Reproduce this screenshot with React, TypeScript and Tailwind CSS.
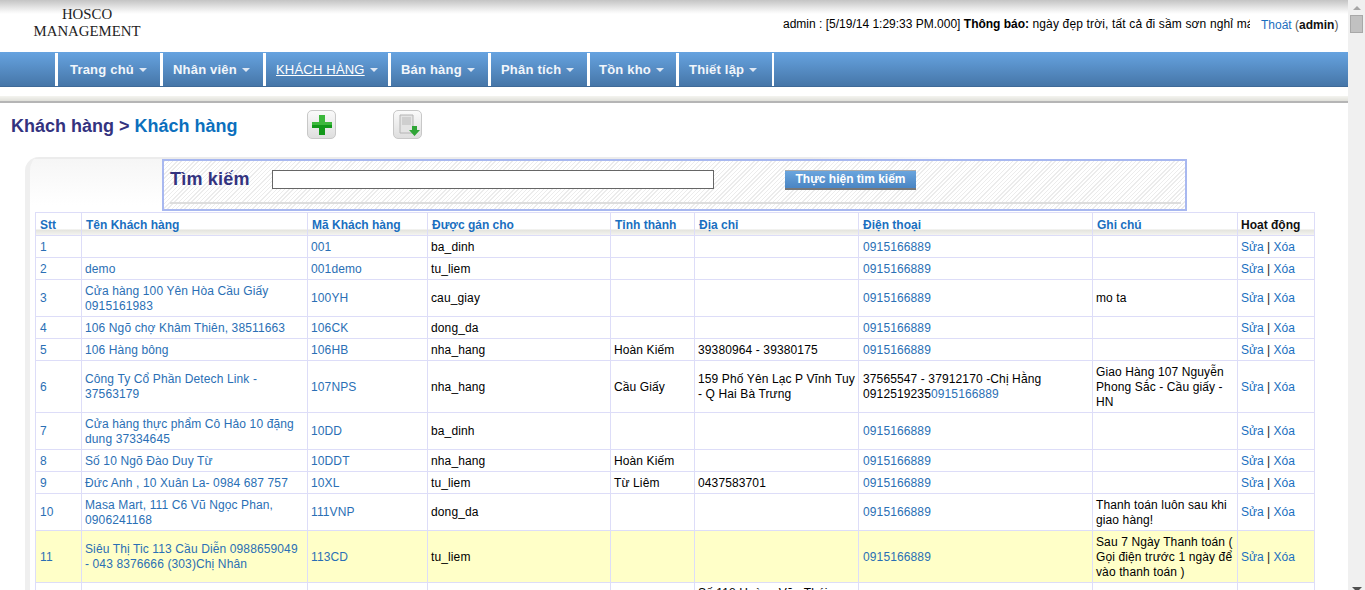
import React from "react";

const headers = ["Stt", "Tên Khách hàng", "Mã Khách hàng", "Được gán cho", "Tỉnh thành", "Địa chỉ", "Điện thoại", "Ghi chú", "Hoạt động"];
const menus = [
  { label: "Trang chủ", w: "w-[105px] pl-[12px]" },
  { label: "Nhân viên", w: "w-[103px] pl-[10px]" },
  { label: "KHÁCH HÀNG", w: "w-[125px] pl-[10px]", active: true },
  { label: "Bán hàng", w: "w-[100px] pl-[10px]" },
  { label: "Phân tích", w: "w-[99px] pl-[10px]" },
  { label: "Tồn kho", w: "w-[89px] pl-[9px]" },
  { label: "Thiết lập", w: "w-[96px] pl-[10px]" },
];

const rows = [
  { h: "h-[22px]", name: "", code: "001", user: "ba_dinh", city: "", addr: "", phone: ["0915166889"], note: "" },
  { h: "h-[22px]", name: "demo", code: "001demo", user: "tu_liem", city: "", addr: "", phone: ["0915166889"], note: "" },
  { h: "h-[37px]", name: "Cửa hàng 100 Yên Hòa Cầu Giấy 0915161983", code: "100YH", user: "cau_giay", city: "", addr: "", phone: ["0915166889"], note: "mo ta" },
  { h: "h-[22px]", name: "106 Ngõ chợ Khâm Thiên, 38511663", code: "106CK", user: "dong_da", city: "", addr: "", phone: ["0915166889"], note: "" },
  { h: "h-[22px]", name: "106 Hàng bông", code: "106HB", user: "nha_hang", city: "Hoàn Kiếm", addr: "39380964 - 39380175", phone: ["0915166889"], note: "" },
  { h: "h-[52px]", name: "Công Ty Cổ Phần Detech Link - 37563179", code: "107NPS", user: "nha_hang", city: "Cầu Giấy", addr: "159 Phố Yên Lạc P Vĩnh Tuy - Q Hai Bà Trưng", phone: ["37565547 - 37912170 -Chị Hằng 0912519235", "0915166889"], note: "Giao Hàng 107 Nguyễn Phong Sắc - Cầu giấy - HN" },
  { h: "h-[37px]", name: "Cửa hàng thực phẩm Cô Hảo 10 đặng dung 37334645", code: "10DD", user: "ba_dinh", city: "", addr: "", phone: ["0915166889"], note: "" },
  { h: "h-[22px]", name: "Số 10 Ngõ Đào Duy Từ", code: "10DDT", user: "nha_hang", city: "Hoàn Kiếm", addr: "", phone: ["0915166889"], note: "" },
  { h: "h-[22px]", name: "Đức Anh , 10 Xuân La- 0984 687 757", code: "10XL", user: "tu_liem", city: "Từ Liêm", addr: "0437583701", phone: ["0915166889"], note: "" },
  { h: "h-[37px]", name: "Masa Mart, 111 C6 Vũ Ngọc Phan, 0906241168", code: "111VNP", user: "dong_da", city: "", addr: "", phone: ["0915166889"], note: "Thanh toán luôn sau khi giao hàng!" },
  { h: "h-[52px]", name: "Siêu Thị Tic 113 Cầu Diễn 0988659049 - 043 8376666 (303)Chị Nhân", code: "113CD", user: "tu_liem", city: "", addr: "", phone: ["0915166889"], note: "Sau 7 Ngày Thanh toán ( Gọi điện trước 1 ngày để vào thanh toán )", hl: true },
];

const Caret = () => (
  <span className="inline-block ml-[5px] align-middle border-x-[4px] border-x-transparent border-t-[4px] border-t-[#dfe8f3]" />
);

const App = () => {
  return (
    <div className="h-[590px] w-[1365px] overflow-hidden flex bg-white font-['Liberation_Sans',Arial,sans-serif] text-[12px] leading-[15px] text-black">
      <div className="w-[1348px] shrink-0 overflow-hidden">
        {/* top bar */}
        <header className="h-[52px] flex bg-[linear-gradient(#c4c4c4,#f4f4f4_11px,#fff_14px)]">
          <div className="w-[174px] shrink-0 pt-[6px] text-center font-['Liberation_Serif',serif] text-[14.8px] leading-[17px] text-[#222]">
            HOSCO
            <br />
            MANAGEMENT
          </div>
          <div className="ml-[609px] w-[467px] shrink-0 pt-[17px] overflow-hidden whitespace-nowrap">
            admin : [5/19/14 1:29:33 PM.000] <b>Thông báo:</b>{" "}
            <span className="tracking-[0.15px]">ngày đẹp trời, tất cả đi sầm sơn nghỉ mát</span>
          </div>
          <div className="ml-[11px] pt-[18px] whitespace-nowrap text-[#1a6fc0]">
            Thoát <span className="text-[#555]">(</span>
            <b className="text-[#111]">admin</b>
            <span className="text-[#555]">)</span>
          </div>
        </header>

        {/* menu */}
        <nav className="h-[35px] flex pl-[55px] border-b-[1px] border-b-[#3f6a98] bg-[linear-gradient(#66a3e0,#4676a8)]">
          {menus.map((m) => (
            <a
              key={m.label}
              className={`${m.w} flex items-center border-l-[3px] border-l-white text-[13px] font-bold tracking-[0.2px] text-[#f2f6fb] mt-[1px]`}
            >
              <span className={m.active ? "underline font-normal text-white" : ""}>{m.label}</span>
              <Caret />
            </a>
          ))}
          <span className="border-l-[2px] border-l-white mt-[1px]" />
        </nav>

        <div className="h-[9px]" />
        <div className="h-[7px] border-b-[2px] border-b-[#b5b5b5] bg-[linear-gradient(#f4f4f0,#e0e0da)]" />

        {/* title + actions */}
        <div className="h-[54px] flex items-start pt-[7px]">
          <h1 className="w-[307px] pl-[11px] pt-[5px] text-[18px] leading-[22px] font-bold text-[#33337f] whitespace-nowrap">
            Khách hàng &gt; <span className="text-[#0b6fbd]">Khách hàng</span>
          </h1>
          <button className="w-[29px] h-[29px] rounded-[5px] border border-[#c8c8c8] bg-[linear-gradient(#fafafa,#dedede)] flex items-center justify-center">
            <svg width="22" height="22" viewBox="0 0 22 22">
              <path d="M8 1h6v7h7v6h-7v7H8v-7H1V8h7z" fill="#12981a" />
              <path d="M8 1h6v7h7v3H1V8h7z" fill="#3cb83c" />
            </svg>
          </button>
          <button className="ml-[57px] w-[29px] h-[29px] rounded-[5px] border border-[#c8c8c8] bg-[linear-gradient(#fafafa,#dedede)] flex items-center justify-center">
            <svg width="26" height="26" viewBox="0 0 26 26">
              <path d="M5 3h13v18H5z" fill="#e4e4e4" stroke="#b4b4b4" />
              <path d="M7 5h9v8H7z" fill="#cfcfcf" />
              <path d="M17 14h5v4h3l-5.500 6-5.500-6h3z" fill="#2fa536" />
            </svg>
          </button>
        </div>

        {/* card */}
        <section className="ml-[25px] mr-[20px] pl-[5px] pt-[2px] rounded-tl-[14px] border-l-[5px] border-l-[#efefef] bg-[linear-gradient(90deg,transparent_60%,#fff_72%),linear-gradient(#ececec_0,#ececec_2px,#f6f6f6_2px,#fff_48px)]">
          <div className="ml-[127px] w-[1025px] h-[52px] pt-[8px] pr-[4px] pl-[6px] flex flex-col border-[2px] border-[#a8b8f0] bg-[repeating-linear-gradient(135deg,#ececec_0,#ececec_1px,#fff_1px,#fff_3px)]">
            <div className="h-[25px] flex items-start">
              <span className="w-[102px] text-[18px] leading-[20px] font-bold tracking-[0.2px] text-[#33337f]">Tìm kiếm</span>
              <input className="w-[442px] h-[19px] mt-[1px] border border-[#666] bg-white" />
              <button className="ml-[71px] w-[131px] h-[20px] mt-[1px] border-b-[2px] border-b-[#777] border-t border-t-[#aaa] bg-[linear-gradient(#6aa5de,#4a85c3)] text-[12px] font-bold leading-[15px] text-white">
                Thực hiện tìm kiếm
              </button>
            </div>
            <div className="mt-[8px] h-[2px] bg-[#ddd]" />
          </div>

          <table className="table-fixed border-collapse w-[1279px] mt-[1px] mb-[40px] tracking-[0.12px]">
            <colgroup>
              <col className="w-[46px]" />
              <col className="w-[226px]" />
              <col className="w-[120px]" />
              <col className="w-[183px]" />
              <col className="w-[84px]" />
              <col className="w-[164px]" />
              <col className="w-[234px]" />
              <col className="w-[145px]" />
              <col className="w-[77px]" />
            </colgroup>
            <thead>
              <tr className="h-[23px] bg-[linear-gradient(#fff_0,#fff_16px,#e4e4de_17px,#f4f4f0_22px)]">
                {headers.map((h, i) => (
                  <th
                    key={h}
                    className={`border border-[#ddddf8] pt-[2px] px-[4px] text-left text-[12px] font-bold tracking-normal ${i === 8 ? "text-[#111] pl-[3px]" : "text-[#1a6fc0]"}`}
                  >
                    {h}
                  </th>
                ))}
              </tr>
            </thead>
            <tbody>
              {rows.map((r, i) => (
                <tr key={i} className={`${r.h} ${r.hl ? "bg-[#ffffc8]" : ""}`}>
                  <td className="border border-[#ddddf8] pt-[1px] px-[4px] text-[#2a6fb5]">{i + 1}</td>
                  <td className="border border-[#ddddf8] pt-[1px] pl-[3px] pr-[8px] text-[#2a6fb5]">{r.name}</td>
                  <td className="border border-[#ddddf8] pt-[1px] px-[3px] text-[#2a6fb5]">{r.code}</td>
                  <td className="border border-[#ddddf8] pt-[1px] px-[3px]">{r.user}</td>
                  <td className="border border-[#ddddf8] pt-[1px] px-[3px]">{r.city}</td>
                  <td className="border border-[#ddddf8] pt-[1px] px-[3px]">{r.addr}</td>
                  <td className="border border-[#ddddf8] pt-[1px] px-[4px]">
                    {r.phone.length > 1 ? r.phone[0] : null}
                    <span className="text-[#2a6fb5]">{r.phone[r.phone.length - 1]}</span>
                  </td>
                  <td className="border border-[#ddddf8] pt-[1px] px-[3px]">{r.note}</td>
                  <td className="border border-[#ddddf8] pt-[1px] px-[3px] tracking-normal text-[#1a6fc0]">
                    Sửa <span className="text-[#222]">|</span> Xóa
                  </td>
                </tr>
              ))}
              <tr className="h-[52px]">
                <td className="border border-[#ddddf8]" />
                <td className="border border-[#ddddf8]" />
                <td className="border border-[#ddddf8]" />
                <td className="border border-[#ddddf8]" />
                <td className="border border-[#ddddf8]" />
                <td className="border border-[#ddddf8] px-[3px] pt-[3px] align-top">Số 118 Hoàng Văn Thái</td>
                <td className="border border-[#ddddf8]" />
                <td className="border border-[#ddddf8]" />
                <td className="border border-[#ddddf8]" />
              </tr>
            </tbody>
          </table>
        </section>
      </div>

      {/* scrollbar */}
      <aside className="w-[17px] shrink-0 flex flex-col bg-[#f0f0f0]">
        <div className="h-[15px] flex items-center justify-center">
          <span className="border-x-[4px] border-x-transparent border-b-[4px] border-b-[#a6a6a6]" />
        </div>
        <div className="mx-[2px] h-[18px] bg-[#c1c1c1] border border-[#a8a8a8]" />
        <div className="flex-1" />
        <div className="h-[3px] flex justify-center overflow-hidden">
          <span className="border-x-[5px] border-x-transparent border-t-[5px] border-t-[#505050]" />
        </div>
      </aside>
    </div>
  );
};

export default App;
